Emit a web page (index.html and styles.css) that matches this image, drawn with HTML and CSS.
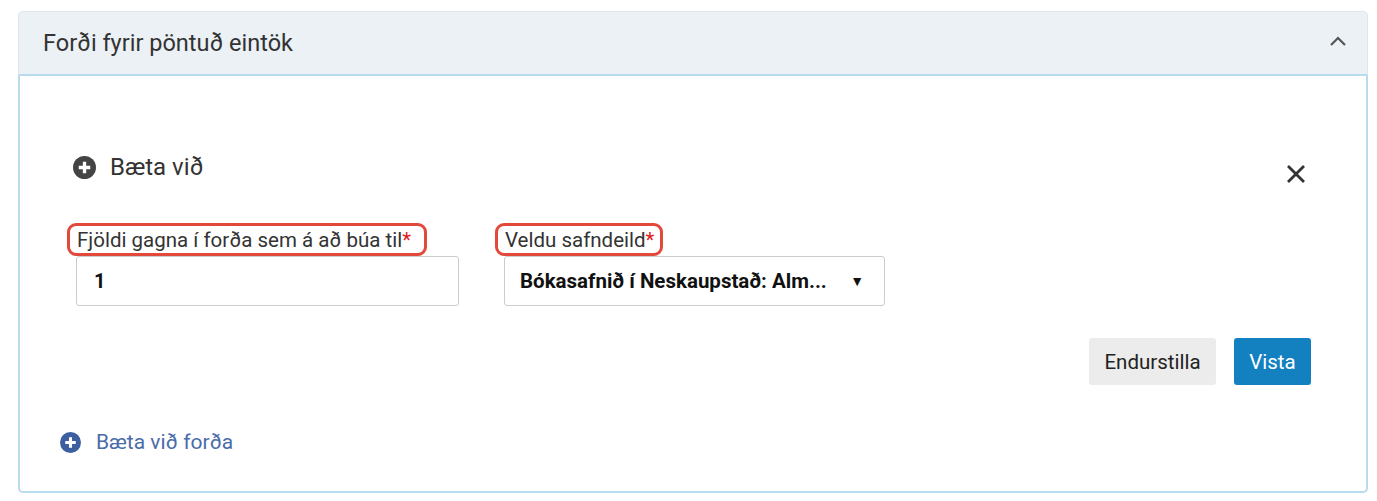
FILE: index.html
```html
<!DOCTYPE html>
<html lang="is">
<head>
<meta charset="utf-8">
<title>Forði</title>
<link rel="stylesheet" href="styles.css">
</head>
<body>
<section class="card">
  <header class="card-head">
    <h2 class="card-title">Forði fyrir pöntuð eintök</h2>
    <svg class="chevron" width="18" height="12" viewBox="0 0 18 12"><path d="M2 10 L9 3 L16 10" fill="none" stroke="#555" stroke-width="2.2"/></svg>
  </header>
  <div class="card-body">
    <div class="form-block">
      <div class="form-top">
        <div class="form-title">
          <svg class="plus" width="23" height="23" viewBox="0 0 22 22"><circle cx="11" cy="11" r="11" fill="#444"/><path d="M11 5.5 V16.5 M5.5 11 H16.5" stroke="#fff" stroke-width="3.2"/></svg>
          <span>Bæta við</span>
        </div>
        <svg class="close" width="22" height="22" viewBox="0 0 22 22"><path d="M3 3 L19 19 M19 3 L3 19" stroke="#333" stroke-width="2.8"/></svg>
      </div>
      <div class="fields">
        <div class="field field-num">
          <label class="label marked marked-wide">Fjöldi gagna í forða sem á að búa til<span class="req">*</span></label>
          <div class="input">1</div>
        </div>
        <div class="field field-sel">
          <label class="label marked">Veldu safndeild<span class="req">*</span></label>
          <div class="select"><span class="sel-text">Bókasafnið í Neskaupstað: Alm...</span><span class="arrow">▼</span></div>
        </div>
      </div>
      <div class="actions">
        <button class="btn btn-reset">Endurstilla</button>
        <button class="btn btn-save">Vista</button>
      </div>
    </div>
    <a class="add-more" href="#">
      <svg width="21" height="21" viewBox="0 0 22 22"><circle cx="11" cy="11" r="11" fill="#3e5f9f"/><path d="M11 5.5 V16.5 M5.5 11 H16.5" stroke="#fff" stroke-width="3.2"/></svg>
      <span>Bæta við forða</span>
    </a>
  </div>
</section>
</body>
</html>
```

FILE: styles.css
```css
* { box-sizing: border-box; }
html, body { margin: 0; padding: 0; background: #fff; }
body {
  font-family: Roboto, "Liberation Sans", Arial, sans-serif;
  color: #333;
  padding: 11px 9px 0 18px;
}
.card {
  width: 1350px;
  height: 482px;
  display: flex;
  flex-direction: column;
}
.card-head {
  height: 65px;
  background: #ebf1f5;
  border: 1px solid #dfe5ea;
  border-bottom: 2px solid #b8dbef;
  border-radius: 5px 5px 0 0;
  display: flex;
  align-items: center;
  justify-content: space-between;
  padding: 0 20px 0 24px;
}
.card-title {
  margin: 0;
  font-size: 23.5px;
  font-weight: 400;
  color: #333;
}
.chevron { margin-top: -4px; }
.card-body {
  flex: 1;
  border: 2px solid #b8dbef;
  border-top: none;
  border-radius: 0 0 5px 5px;
  padding: 0 0 0 40px;
}
.form-block {
  padding: 76px 55px 0 16px;
}
.form-top {
  display: flex;
  justify-content: space-between;
  align-items: flex-start;
  height: 30px;
}
.form-title {
  display: flex;
  align-items: center;
  gap: 14px;
  font-size: 24px;
  line-height: 30px;
  color: #333;
  margin-left: -3px;
}
.close { margin-top: 11px; margin-right: 4px; }
.fields {
  display: flex;
  gap: 45px;
  margin-top: 44px;
}
.field { display: flex; flex-direction: column; }
.field-num { width: 383px; }
.field-sel { width: 381px; }
.label {
  font-size: 20.5px;
  line-height: 28px;
  color: #333;
  align-self: flex-start;
  margin-left: 1px;
  position: relative;
}
.req { color: #e0201a; }
.marked::after {
  content: "";
  position: absolute;
  left: -10px;
  right: -9px;
  top: -3px;
  bottom: -2px;
  border: 3px solid #e2493a;
  border-radius: 9px;
}
.marked-wide::after { right: -16px; }
.input, .select {
  height: 50px;
  border: 1px solid #ccc;
  border-radius: 3px;
  margin-top: 2px;
  display: flex;
  align-items: center;
  font-size: 20px;
  font-weight: 700;
  color: #111;
}
.input { padding-left: 17px; }
.select { padding: 0 20px 0 15px; font-size: 20.5px; }
.sel-text {
  white-space: nowrap;
}
.arrow { font-size: 14px; margin-left: auto; }
.actions {
  display: flex;
  justify-content: flex-end;
  gap: 18px;
  margin-top: 32px;
}
.btn {
  font-family: inherit;
  font-size: 20.5px;
  height: 47px;
  border: none;
  border-radius: 3px;
  padding: 0 10px;
  cursor: pointer;
}
.btn-reset { background: #ececec; color: #222; width: 127px; }
.btn-save { background: #1380c0; color: #fff; width: 77px; }
.add-more {
  display: inline-flex;
  align-items: center;
  gap: 15px;
  margin-top: 44px;
  font-size: 21px;
  line-height: 26px;
  color: #4a6ca8;
  text-decoration: none;
}
```
